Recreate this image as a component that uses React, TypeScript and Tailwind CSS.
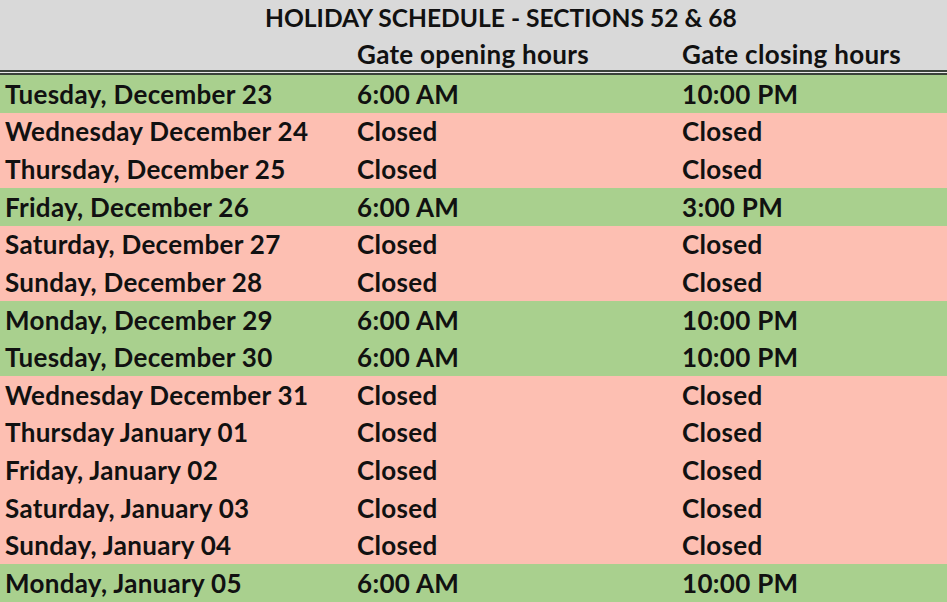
const ROWS: [string, string, string][] = [
  ['Tuesday, December 23', '6:00 AM', '10:00 PM'],
  ['Wednesday December 24', 'Closed', 'Closed'],
  ['Thursday, December 25', 'Closed', 'Closed'],
  ['Friday, December 26', '6:00 AM', '3:00 PM'],
  ['Saturday, December 27', 'Closed', 'Closed'],
  ['Sunday, December 28', 'Closed', 'Closed'],
  ['Monday, December 29', '6:00 AM', '10:00 PM'],
  ['Tuesday, December 30', '6:00 AM', '10:00 PM'],
  ['Wednesday December 31', 'Closed', 'Closed'],
  ['Thursday January 01', 'Closed', 'Closed'],
  ['Friday, January 02', 'Closed', 'Closed'],
  ['Saturday, January 03', 'Closed', 'Closed'],
  ['Sunday, January 04', 'Closed', 'Closed'],
  ['Monday, January 05', '6:00 AM', '10:00 PM'],
]

export default function App() {
  return (
    <div
      className="w-[947px] h-[602px] overflow-hidden text-[26px] tracking-[0.3px] font-bold text-[#111] leading-none"
      style={{ fontFamily: 'Lato, "Liberation Sans", sans-serif' }}
    >
      <div className="bg-[#d9d9d9]">
        <div className="h-[37px] flex items-center pl-[265px] text-[24.6px] tracking-normal">
          HOLIDAY SCHEDULE - SECTIONS 52 &amp; 68
        </div>
        <div className="h-[33px] grid grid-cols-[357px_325px_1fr] items-center">
          <div />
          <div>Gate opening hours</div>
          <div>Gate closing hours</div>
        </div>
      </div>
      <div className="h-[5px] flex flex-col">
        <div className="h-[2px] bg-[#3a433a]" />
        <div className="h-[1px] bg-[#e8e8e8]" />
        <div className="h-[2px] bg-[#3a433a]" />
      </div>
      <div className="flex flex-col">
        {ROWS.map(([day, open, close]) => {
          const closed = open === 'Closed'
          return (
            <div
              key={day}
              className={`h-[37.64px] grid grid-cols-[357px_325px_1fr] items-center ${closed ? 'bg-[#fdbfb2]' : 'bg-[#a9d08e]'}`}
            >
              <div className="pl-[5px]">{day}</div>
              <div>{open}</div>
              <div>{close}</div>
            </div>
          )
        })}
      </div>
    </div>
  )
}
